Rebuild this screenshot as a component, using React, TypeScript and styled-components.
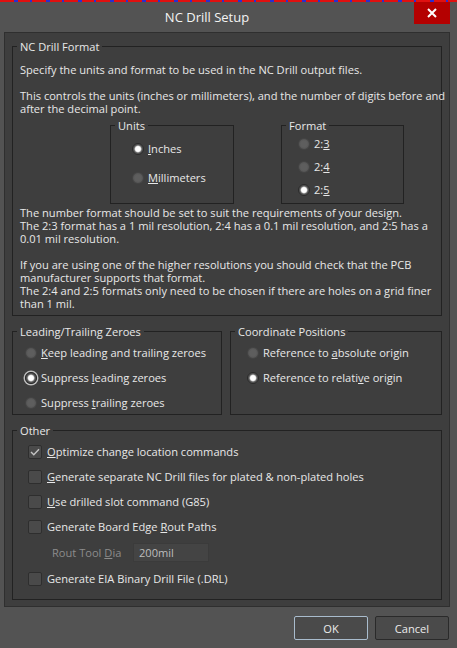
import React from 'react'
import styled, { createGlobalStyle } from 'styled-components'

const GlobalStyle = createGlobalStyle`
  html, body {
    margin: 0;
    padding: 0;
    background: #535353;
  }
  body {
    font-family: "Open Sans", "Noto Sans", sans-serif;
    font-size: 11.1px;
    color: #e8e8e8;
  }
`

const Window = styled.div`
  width: 457px;
  height: 648px;
  background: #535353;
  display: flex;
  flex-direction: column;
  overflow: hidden;
`

const Stripe = styled.div`
  height: 2px;
  background: repeating-linear-gradient(90deg, #e01010 0 14px, #2c2cd0 14px 18px, #e01010 18px 30px, #2c2cd0 30px 32px);
`

const TitleBar = styled.div`
  height: 30px;
  display: flex;
  align-items: flex-start;
`

const Title = styled.div`
  flex: 1;
  text-align: center;
  font-size: 13px;
  color: #f4f4f4;
  line-height: 30px;
`

const CloseButton = styled.div`
  margin-right: 7px;
  width: 36px;
  height: 22px;
  background: #b40000;
  display: flex;
  align-items: center;
  justify-content: center;
`

const Body = styled.div`
  margin: 0 7px 0 4px;
  height: 575px;
  box-sizing: border-box;
  background: #3e3e3e;
  border: 1px solid #2f2f2f;
  padding: 7px 7px 0 7px;
  display: flex;
  flex-direction: column;
`

const Group = styled.fieldset<{ $h: number; $w?: number; $grow?: boolean; $top?: number }>`
  margin: ${(p) => p.$top ?? 0}px 0 0 0;
  border: 1px solid #222222;
  padding: 0;
  min-width: 0;
  box-sizing: border-box;
  flex: ${(p) => (p.$grow ? '1 1 0' : 'none')};
  height: ${(p) => p.$h}px;
  ${(p) => (p.$w ? `width: ${p.$w}px;` : '')}
`

const Legend = styled.legend`
  padding: 0 3px;
  margin-left: 4px;
  line-height: 13px;
  color: #e8e8e8;
`

const Content = styled.div`
  padding-left: 7px;
`

const Para = styled.p<{ $top?: number }>`
  margin: ${(p) => p.$top ?? 0}px 0 0 0;
  line-height: 13px;
  white-space: nowrap;
`

const BoxRow = styled.div`
  display: flex;
  gap: 47px;
  margin: 4px 0 0 90px;
`

const OptionList = styled.div<{ $left: number; $top: number; $gap: number }>`
  display: flex;
  flex-direction: column;
  gap: ${(p) => p.$gap}px;
  padding: ${(p) => p.$top}px 0 0 ${(p) => p.$left}px;
`

const Option = styled.label`
  display: flex;
  align-items: center;
  gap: 4px;
  height: 14px;
  line-height: 14px;
  white-space: nowrap;
`

const RadioDot = styled.span<{ $on?: boolean; $focus?: boolean }>`
  width: 12px;
  height: 12px;
  border-radius: 50%;
  flex: none;
  box-sizing: border-box;
  background: ${(p) =>
    p.$on
      ? 'radial-gradient(circle, #ffffff 0 2.4px, #d0d0d0 3px, #555555 4px)'
      : 'radial-gradient(circle, #5e5e5e 0 3px, #555555 5px)'};
  border: 1px solid ${(p) => (p.$on ? '#2b2b2b' : '#444444')};
  box-shadow: ${(p) => (p.$focus ? '0 0 0 1.5px #bdbdbd' : 'none')};
`

const TwoCol = styled.div`
  display: flex;
  gap: 8px;
  margin-top: 9px;
`

const Check = styled.span`
  width: 14px;
  height: 14px;
  flex: none;
  box-sizing: border-box;
  border: 1px solid #2e2e2e;
  border-radius: 2px;
  background: #4a4a4a;
  display: flex;
  align-items: center;
  justify-content: center;
`

const CheckRow = styled(Option)`
  gap: 5px;
`

const SubRow = styled.div`
  display: flex;
  align-items: center;
  padding-left: 39px;
  height: 20px;
  margin-top: 8px;
`

const SubLabel = styled.span`
  color: #8c8c8c;
  width: 81px;
`

const TextInput = styled.div`
  width: 76px;
  height: 19px;
  box-sizing: border-box;
  background: #444444;
  border: 1px solid #3b3b3b;
  color: #bdbdbd;
  padding-left: 5px;
  line-height: 17px;
`

const Footer = styled.div`
  display: flex;
  justify-content: flex-end;
  gap: 7px;
  padding: 9px 8px 0 0;
`

const Button = styled.div<{ $focus?: boolean }>`
  width: 74px;
  height: 24px;
  box-sizing: border-box;
  border: 1px solid ${(p) => (p.$focus ? '#a9bccd' : '#2a2a2a')};
  border-radius: 2px;
  background: #4a4a4a;
  color: #ececec;
  display: flex;
  align-items: center;
  justify-content: center;
`

const CheckMark = () => (
  <svg width="10" height="8" viewBox="0 0 10 8">
    <path d="M1 4 L3.8 6.8 L9 1.2" fill="none" stroke="#c4c4c4" strokeWidth="1.4" />
  </svg>
)

const Radio: React.FC<{ on?: boolean; focus?: boolean; children: React.ReactNode }> = ({ on, focus, children }) => (
  <Option>
    <RadioDot $on={on} $focus={focus} />
    <span>{children}</span>
  </Option>
)

const CheckItem: React.FC<{ on?: boolean; children: React.ReactNode }> = ({ on, children }) => (
  <CheckRow>
    <Check>{on && <CheckMark />}</Check>
    <span>{children}</span>
  </CheckRow>
)

export default function App() {
  return (
    <>
      <GlobalStyle />
      <Window>
        <Stripe />
        <TitleBar>
          <Title>NC Drill Setup</Title>
          <CloseButton>
            <svg width="10" height="10" viewBox="0 0 10 10">
              <path d="M1 1 L9 9 M9 1 L1 9" stroke="#ffffff" strokeWidth="2" />
            </svg>
          </CloseButton>
        </TitleBar>
        <Body>
          <Group $h={276}>
            <Legend>NC Drill Format</Legend>
            <Content>
              <Para $top={10}>Specify the units and format to be used in the NC Drill output files.</Para>
              <Para $top={13}>
                This controls the units (inches or millimeters), and the number of digits before and
                <br />
                after the decimal point.
              </Para>
              <BoxRow>
                <Group $w={124} $h={85}>
                  <Legend>Units</Legend>
                  <OptionList $left={21} $top={10} $gap={15}>
                    <Radio on>
                      <u>I</u>nches
                    </Radio>
                    <Radio>
                      <u>M</u>illimeters
                    </Radio>
                  </OptionList>
                </Group>
                <Group $w={123} $h={85}>
                  <Legend>Format</Legend>
                  <OptionList $left={16} $top={5} $gap={9}>
                    <Radio>
                      2:<u>3</u>
                    </Radio>
                    <Radio>
                      2:<u>4</u>
                    </Radio>
                    <Radio on>
                      2:<u>5</u>
                    </Radio>
                  </OptionList>
                </Group>
              </BoxRow>
              <Para $top={2}>
                The number format should be set to suit the requirements of your design.
                <br />
                The 2:3 format has a 1 mil resolution, 2:4 has a 0.1 mil resolution, and 2:5 has a
                <br />
                0.01 mil resolution.
              </Para>
              <Para $top={13}>
                If you are using one of the higher resolutions you should check that the PCB
                <br />
                manufacturer supports that format.
                <br />
                The 2:4 and 2:5 formats only need to be chosen if there are holes on a grid finer
                <br />
                than 1 mil.
              </Para>
            </Content>
          </Group>
          <TwoCol>
            <Group $w={210} $h={90}>
              <Legend>Leading/Trailing Zeroes</Legend>
              <OptionList $left={12} $top={8} $gap={11}>
                <Radio>
                  <u>K</u>eep leading and trailing zeroes
                </Radio>
                <Radio on focus>
                  Suppress <u>l</u>eading zeroes
                </Radio>
                <Radio>
                  Suppress <u>t</u>railing zeroes
                </Radio>
              </OptionList>
            </Group>
            <Group $grow $h={90}>
              <Legend>Coordinate Positions</Legend>
              <OptionList $left={16} $top={8} $gap={11}>
                <Radio>
                  Reference to <u>a</u>bsolute origin
                </Radio>
                <Radio on>
                  Reference to relati<u>v</u>e origin
                </Radio>
              </OptionList>
            </Group>
          </TwoCol>
          <Group $h={176} $top={9}>
            <Legend>Other</Legend>
            <OptionList $left={15} $top={8} $gap={11}>
              <CheckItem on>
                <u>O</u>ptimize change location commands
              </CheckItem>
              <CheckItem>
                <u>G</u>enerate separate NC Drill files for plated &amp; non-plated holes
              </CheckItem>
              <CheckItem>
                <u>U</u>se drilled slot command (G85)
              </CheckItem>
              <CheckItem>
                Generate Board Edge <u>R</u>out Paths
              </CheckItem>
            </OptionList>
            <SubRow>
              <SubLabel>
                Rout Tool <u>D</u>ia
              </SubLabel>
              <TextInput>200mil</TextInput>
            </SubRow>
            <OptionList $left={15} $top={10} $gap={11}>
              <CheckItem>Generate EIA Binary Drill File (.DRL)</CheckItem>
            </OptionList>
          </Group>
        </Body>
        <Footer>
          <Button $focus>OK</Button>
          <Button>Cancel</Button>
        </Footer>
      </Window>
    </>
  )
}
